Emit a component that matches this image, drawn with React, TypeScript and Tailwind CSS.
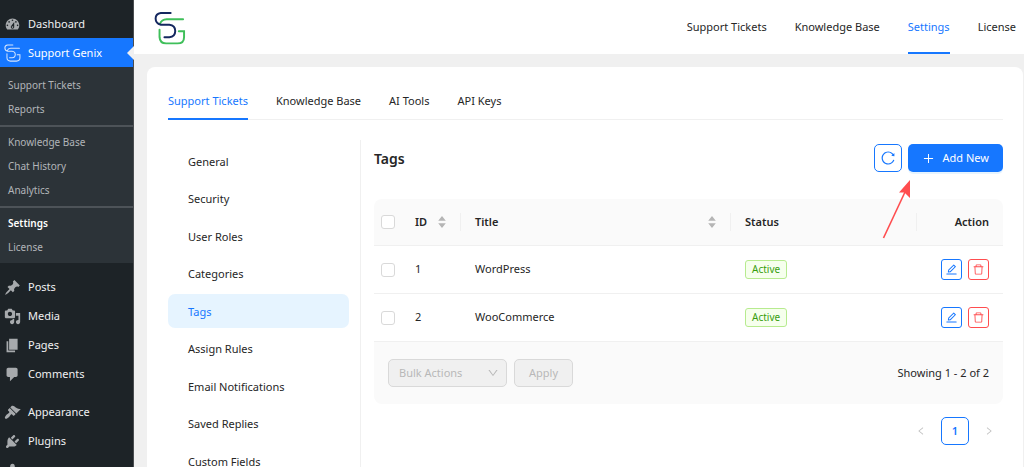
import { clsx } from "clsx";
import type { ReactNode } from "react";
import {
  AiOutlineDelete,
  AiOutlineDown,
  AiOutlineEdit,
  AiOutlineLeft,
  AiOutlinePlus,
  AiOutlineReload,
  AiOutlineRight,
} from "react-icons/ai";

const icons = {
  dashboard:
    "M3.76 16h12.48c1.1-1.37 1.76-3.11 1.76-5 0-4.42-3.58-8-8-8s-8 3.58-8 8c0 1.89.66 3.63 1.76 5zM10 4c.55 0 1 .45 1 1s-.45 1-1 1-1-.45-1-1 .45-1 1-1zM6 6c.55 0 1 .45 1 1s-.45 1-1 1-1-.45-1-1 .45-1 1-1zm8 0c.55 0 1 .45 1 1s-.45 1-1 1-1-.45-1-1 .45-1 1-1zm-5.37 5.55L12 7v6c0 1.1-.9 2-2 2s-2-.9-2-2c0-.57.24-1.08.63-1.45zM4 10c.55 0 1 .45 1 1s-.45 1-1 1-1-.45-1-1 .45-1 1-1zm12 0c.55 0 1 .45 1 1s-.45 1-1 1-1-.45-1-1 .45-1 1-1zm-5 3c0-.55-.45-1-1-1s-1 .45-1 1 .45 1 1 1 1-.45 1-1z",
  post: "M10.44 3.02l1.82-1.82 6.36 6.35-1.83 1.82c-1.05-.68-2.48-.57-3.41.36l-.75.75c-.92.93-1.04 2.35-.35 3.41l-1.83 1.82-2.41-2.41-2.8 2.79c-.42.42-3.38 2.71-3.8 2.29s1.86-3.39 2.28-3.81l2.79-2.79L4.1 9.36l1.83-1.82c1.05.69 2.48.57 3.4-.36l.75-.75c.93-.92 1.05-2.35.36-3.41z",
  media:
    "M13 11V4c0-.55-.45-1-1-1h-1.67L9 1H5L3.67 3H2c-.55 0-1 .45-1 1v7c0 .55.45 1 1 1h10c.55 0 1-.45 1-1zM7 4.5c1.38 0 2.5 1.12 2.5 2.5S8.38 9.5 7 9.5 4.5 8.38 4.5 7 5.62 4.5 7 4.5zM14 6h5v10.5c0 1.38-1.12 2.5-2.5 2.5S14 17.88 14 16.5s1.12-2.5 2.5-2.5c.17 0 .34.02.5.05V9h-3V6zm-4 8.05V13h2v3.5c0 1.38-1.12 2.5-2.5 2.5S7 17.88 7 16.5 8.12 14 9.5 14c.17 0 .34.02.5.05z",
  page: "M6 15V2h10v13H6zm-1 1h8v2H3V5h2v11z",
  comment:
    "M5 2h9c1.1 0 2 .9 2 2v7c0 1.1-.9 2-2 2h-2l-5 5v-5H5c-1.1 0-2-.9-2-2V4c0-1.1.9-2 2-2z",
  appearance:
    "M14.48 11.06L7.41 3.99l1.5-1.5c.5-.56 2.3-.47 3.51.32 1.21.8 1.43 1.28 2.91 2.1 1.18.64 2.45 1.26 4.45.85zm-.71.71L6.7 4.7 4.93 6.47c-.39.39-.39 1.02 0 1.41l1.06 1.06c.39.39.39 1.03 0 1.42-.6.6-1.43 1.11-2.21 1.69-.35.26-.7.53-1.01.84C1.43 14.23.4 16.08 1.4 17.07c.99 1 2.84-.03 4.18-1.36.31-.31.58-.66.85-1.02.57-.78 1.08-1.61 1.69-2.21.39-.39 1.02-.39 1.41 0l1.06 1.06c.39.39 1.02.39 1.41 0z",
  plugin:
    "M13.11 4.36L9.87 7.6 8 5.73l3.24-3.24c.35-.34 1.05-.2 1.56.32.52.51.66 1.21.31 1.55zm-8 1.77l.91-1.12 9.01 9.01-1.19.84c-.71.71-2.63 1.16-3.82 1.16H6.14L4.9 17.26c-.59.59-1.54.59-2.12 0-.59-.58-.59-1.53 0-2.12l1.24-1.24v-3.88c0-1.13.4-3.19 1.09-3.89zm7.26 3.97l3.24-3.24c.34-.35 1.04-.21 1.55.31.52.51.66 1.21.31 1.55l-3.24 3.25z",
  user: "M10 9.25c-2.27 0-2.73-3.44-2.73-3.44C7 4.02 7.82 2 9.97 2c2.16 0 2.98 2.02 2.71 3.81 0 0-.41 3.44-2.68 3.44zm0 2.57L12.72 10c2.39 0 4.52 2.33 4.52 4.53v2.49s-3.65 1.13-7.24 1.13c-3.65 0-7.24-1.13-7.24-1.13v-2.49c0-2.25 1.94-4.48 4.47-4.48z",
};

function Logo({ className, top, bottom }: { className: string; top: string; bottom: string }) {
  return (
    <svg viewBox="44 32 96 104" fill="none" strokeWidth="6" strokeLinecap="round" className={className}>
      <path d="M132 57H82Q66 58 62 70M60 89V112Q61 131 80 131H115Q135 131 135 112V94H119" stroke={bottom} />
      <path d="M94 38H64Q48 40 48 55T64 74H90Q108 76 108 93T90 112H75" stroke={top} />
    </svg>
  );
}

function MenuItem({ icon, children }: { icon: keyof typeof icons; children?: ReactNode }) {
  return (
    <a href="#" className="flex h-[29px] shrink-0 items-center gap-[7px] pt-px pl-1 text-[#f0f0f1]">
      <svg viewBox="0 0 20 20" className="size-[17px] fill-[#a7aaad]">
        <path d={icons[icon]} />
      </svg>
      {children}
    </a>
  );
}

function SubItem({ active, children }: { active?: boolean; children: ReactNode }) {
  return (
    <a
      href="#"
      className={clsx(
        "flex h-6 items-center pl-2 text-[10px]",
        active ? "font-semibold text-white" : "text-[#b2b5b9]"
      )}
    >
      {children}
    </a>
  );
}

function Sidebar() {
  return (
    <nav className="flex w-[134px] shrink-0 flex-col border-r border-[#4a4d50] bg-[#1d2327] pt-[9px]">
      <MenuItem icon="dashboard">Dashboard</MenuItem>
      <a
        href="#"
        className="relative flex h-[29px] shrink-0 items-center gap-[7px] bg-[#1677ff] pt-px pl-1 text-white"
      >
        <Logo className="h-[18px] w-[17px]" top="#d5e5fd" bottom="#d5e5fd" />
        Support Genix
        <span className="absolute top-2 -right-px border-y-[7px] border-r-[7px] border-y-transparent border-r-[#f0f0f1]" />
      </a>
      <div className="shrink-0 bg-[#2c3338] pt-[6px] pb-1">
        <SubItem>Support Tickets</SubItem>
        <SubItem>Reports</SubItem>
        <hr className="mt-1 mb-[3px] border-t-2 border-[#4d5358]" />
        <SubItem>Knowledge Base</SubItem>
        <SubItem>Chat History</SubItem>
        <SubItem>Analytics</SubItem>
        <hr className="mt-1 mb-[3px] border-t-2 border-[#4d5358]" />
        <SubItem active>Settings</SubItem>
        <SubItem>License</SubItem>
      </div>
      <div className="shrink-0 pt-[9px]">
        <MenuItem icon="post">Posts</MenuItem>
        <MenuItem icon="media">Media</MenuItem>
        <MenuItem icon="page">Pages</MenuItem>
        <MenuItem icon="comment">Comments</MenuItem>
      </div>
      <div className="shrink-0 pt-[9px]">
        <MenuItem icon="appearance">Appearance</MenuItem>
        <MenuItem icon="plugin">Plugins</MenuItem>
        <MenuItem icon="user" />
      </div>
    </nav>
  );
}

function TabLink({ active, children }: { active?: boolean; children: ReactNode }) {
  return (
    <a
      href="#"
      className={clsx(
        "flex items-center border-b-2 pt-[2px]",
        active ? "border-[#1677ff] text-[#1677ff]" : "border-transparent"
      )}
    >
      {children}
    </a>
  );
}

const sections = [
  "General",
  "Security",
  "User Roles",
  "Categories",
  "Tags",
  "Assign Rules",
  "Email Notifications",
  "Saved Replies",
  "Custom Fields",
];

const tags = [
  { id: 1, title: "WordPress" },
  { id: 2, title: "WooCommerce" },
];

function Checkbox({ label }: { label: string }) {
  return (
    <input
      type="checkbox"
      aria-label={label}
      className="block size-[14px] appearance-none rounded-[3px] border border-[#d9d9d9] bg-white checked:bg-[#1677ff]"
    />
  );
}

function Sorter() {
  return (
    <svg viewBox="0 0 8 12" className="h-3 w-2 fill-[#b5b5b5]">
      <path d="M4 0l3.8 4.8H.2zM4 12L.2 7.2h7.6z" />
    </svg>
  );
}

function HeadCell({ children, sortable }: { children: ReactNode; sortable?: boolean }) {
  return (
    <th scope="col" className="border-b border-[#f0f0f0] p-0 text-left font-semibold">
      <div className="flex h-[18px] items-center justify-between border-r border-[#f0f0f0] px-[14px]">
        {children}
        {sortable && <Sorter />}
      </div>
    </th>
  );
}

function TagsTable() {
  return (
    <div className="overflow-hidden rounded-lg">
      <table className="w-full table-fixed border-separate border-spacing-0">
        <colgroup>
          <col className="w-[27px]" />
          <col className="w-[60px]" />
          <col className="w-[270px]" />
          <col />
          <col className="w-[86px]" />
        </colgroup>
        <thead className="bg-[#fafafa]">
          <tr className="h-[47px]">
            <th scope="col" className="border-b border-[#f0f0f0] p-0 pl-[7px]">
              <Checkbox label="Select all" />
            </th>
            <HeadCell sortable>ID</HeadCell>
            <HeadCell sortable>Title</HeadCell>
            <HeadCell>Status</HeadCell>
            <th scope="col" className="border-b border-[#f0f0f0] p-0 pr-[14px] text-right font-semibold">
              Action
            </th>
          </tr>
        </thead>
        <tbody>
          {tags.map((tag) => (
            <tr key={tag.id} className="h-12 [&>td]:border-b [&>td]:border-[#f0f0f0]">
              <td className="p-0 pl-[7px]">
                <Checkbox label={`Select ${tag.title}`} />
              </td>
              <td className="p-0 pl-[14px]">{tag.id}</td>
              <td className="p-0 pl-[14px]">{tag.title}</td>
              <td className="p-0 pl-[14px]">
                <span className="inline-flex h-[19px] items-center rounded-[3px] border border-[#b7eb8f] bg-[#f6ffed] px-[6px] text-[10px] text-[#389e0d]">
                  Active
                </span>
              </td>
              <td className="p-0 pr-[14px]">
                <div className="flex justify-end gap-[6px]">
                  <button
                    aria-label="Edit"
                    className="flex size-[21px] items-center justify-center rounded-[3px] border border-[#1677ff] text-[#1677ff]"
                  >
                    <AiOutlineEdit className="size-[13px]" />
                  </button>
                  <button
                    aria-label="Delete"
                    className="flex size-[21px] items-center justify-center rounded-[3px] border border-[#ff4d4f] text-[#ff4d4f]"
                  >
                    <AiOutlineDelete className="size-[13px]" />
                  </button>
                </div>
              </td>
            </tr>
          ))}
        </tbody>
      </table>
      <div className="flex h-[62px] items-center gap-[7px] bg-[#fafafa] px-[14px]">
        <div className="relative">
          <select
            disabled
            aria-label="Bulk Actions"
            className="h-7 w-[119px] appearance-none rounded-[5px] border border-[#d9d9d9] bg-[#f0f0f0] pl-[10px] text-[#b8b8b8] opacity-100"
          >
            <option>Bulk Actions</option>
          </select>
          <AiOutlineDown className="pointer-events-none absolute top-2 right-2 size-3 text-[#b8b8b8]" />
        </div>
        <button disabled className="h-7 rounded-[5px] border border-[#d9d9d9] bg-[#f0f0f0] px-[14px] text-[#b8b8b8]">
          Apply
        </button>
        <span className="ml-auto">Showing 1 - 2 of 2</span>
      </div>
    </div>
  );
}

export default function App() {
  return (
    <div className="flex h-screen overflow-hidden bg-[#f0f0f0] font-['Noto_Sans','Open_Sans',sans-serif] text-[11px] text-[#262626]">
      <Sidebar />
      <div className="flex min-w-0 flex-1 flex-col">
        <header className="flex h-[54px] shrink-0 justify-between bg-white pr-2 pl-5">
          <Logo className="mt-[11px] h-[34px] w-8" top="#14275f" bottom="#3fbf5a" />
          <nav className="flex gap-7">
            <TabLink>Support Tickets</TabLink>
            <TabLink>Knowledge Base</TabLink>
            <TabLink active>Settings</TabLink>
            <TabLink>License</TabLink>
          </nav>
        </header>
        <main className="mt-[13px] mr-px ml-[13px] flex-1 rounded-t-lg bg-white pt-4 pr-5 pl-[21px]">
          <nav className="flex h-[37px] gap-7 border-b border-[#f0f0f0] [&>a]:-mb-px">
            <TabLink active>Support Tickets</TabLink>
            <TabLink>Knowledge Base</TabLink>
            <TabLink>AI Tools</TabLink>
            <TabLink>API Keys</TabLink>
          </nav>
          <div className="mt-5 flex">
            <aside className="w-[193px] shrink-0 border-r border-[#f0f0f0] pt-1 pr-[11px] pb-10">
              <ul className="flex h-[334px] flex-col justify-between">
                {sections.map((name) => (
                  <li key={name}>
                    <a
                      href="#"
                      className={clsx(
                        "flex h-[34px] items-center rounded-[7px] pl-5 leading-none",
                        name === "Tags" && "bg-[#e6f4ff] text-[#1677ff]"
                      )}
                    >
                      {name}
                    </a>
                  </li>
                ))}
              </ul>
            </aside>
            <section className="min-w-0 flex-1 pt-1 pl-[13px]">
              <div className="relative mb-[27px] flex items-center gap-[6px]">
                <h1 className="mr-auto text-[14px] font-semibold">Tags</h1>
                <button
                  aria-label="Reload"
                  className="flex size-7 items-center justify-center rounded-[5px] border border-[#1677ff] text-[#1677ff]"
                >
                  <AiOutlineReload className="size-4" />
                </button>
                <button className="flex h-7 items-center gap-2 rounded-[5px] bg-[#1677ff] px-[14px] text-white shadow-[0_2px_0_rgba(5,145,255,0.1)]">
                  <AiOutlinePlus className="size-[13px]" />
                  Add New
                </button>
                <svg viewBox="0 0 30 60" className="absolute top-9 right-[92px] h-[60px] w-[30px]">
                  <path d="M2.500 58L24 12" stroke="#ff4d4f" strokeWidth="1.6" />
                  <path d="M29 0L18 12.500L23.500 12.500L29 18z" fill="#ff4d4f" />
                </svg>
              </div>
              <TagsTable />
              <div className="mt-[13px] flex justify-end gap-[6px]">
                <button aria-label="Previous page" className="flex size-7 items-center justify-center text-[#bfbfbf]">
                  <AiOutlineLeft className="size-[10px]" />
                </button>
                <button className="size-7 rounded-[5px] border border-[#1677ff] font-semibold text-[#1677ff]">1</button>
                <button aria-label="Next page" className="flex size-7 items-center justify-center text-[#bfbfbf]">
                  <AiOutlineRight className="size-[10px]" />
                </button>
              </div>
            </section>
          </div>
        </main>
      </div>
    </div>
  );
}
